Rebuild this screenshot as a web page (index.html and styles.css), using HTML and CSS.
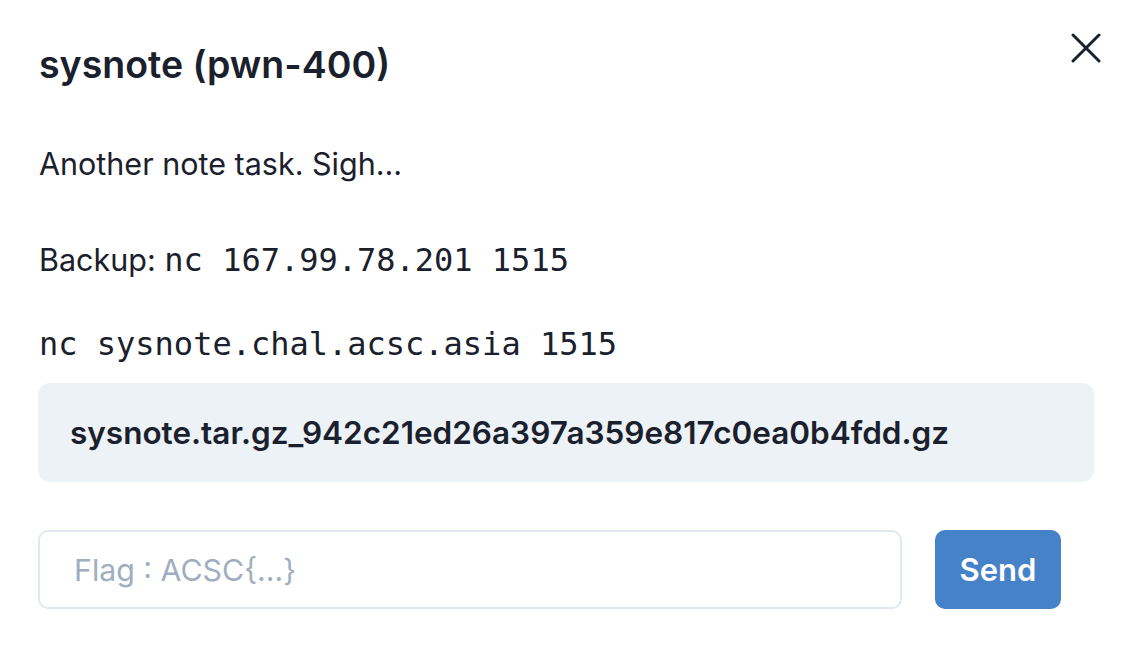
FILE: index.html
```html
<!DOCTYPE html>
<html>
<head>
<meta charset="utf-8">
<link rel="stylesheet" href="styles.css">
</head>
<body>
<div class="modal">
  <header class="header">
    <h2 class="title">sysnote (pwn-400)</h2>
    <button class="close" aria-label="Close">
      <svg width="30" height="30" viewBox="0 0 30 30"><path d="M2 2 L28 28 M28 2 L2 28" stroke="#1a202c" stroke-width="3" stroke-linecap="round" fill="none"/></svg>
    </button>
  </header>
  <p class="text first">Another note task. Sigh...</p>
  <p class="text second">Backup: <code>nc 167.99.78.201 1515</code></p>
  <p class="text third"><code>nc sysnote.chal.acsc.asia 1515</code></p>
  <div class="file">sysnote.tar.gz_942c21ed26a397a359e817c0ea0b4fdd.gz</div>
  <form class="flag-row">
    <input class="flag-input" type="text" placeholder="Flag : ACSC{...}">
    <button class="send" type="button">Send</button>
  </form>
</div>
</body>
</html>
```

FILE: styles.css
```css
html, body {
  margin: 0;
  padding: 0;
  background: #ffffff;
}
body {
  font-family: Inter, "Noto Sans", sans-serif;
  color: #1a202c;
}
.modal {
  padding: 0 38px 0 38px;
}
.header {
  display: flex;
  justify-content: space-between;
  align-items: flex-start;
  padding-top: 40px;
}
.title {
  margin: 0;
  font-size: 37.5px;
  line-height: 50px;
  font-weight: 600;
  padding-left: 1px;
}
.close {
  margin-top: -12px;
  margin-right: -12px;
  width: 40px;
  height: 40px;
  border: none;
  background: transparent;
  padding: 0;
  display: flex;
  align-items: center;
  justify-content: center;
}
.close svg { width: 30px; height: 30px; }
.text {
  margin: 0;
  font-size: 30.5px;
  line-height: 40px;
  padding-left: 1px;
}
.text code {
  font-family: "DejaVu Sans Mono", "Liberation Mono", monospace;
  font-size: 32px;
  line-height: 1;
}
.first { margin-top: 54px; }
.second { margin-top: 56px; }
.third { margin-top: 44px; }
.file {
  margin-top: 19px;
  height: 99px;
  background: #edf2f7;
  border-radius: 12px;
  display: flex;
  align-items: center;
  padding-left: 32px;
  font-size: 31.5px;
  font-weight: 600;
}
.flag-row {
  display: flex;
  align-items: center;
  margin: 48px 0 0 0;
}
.flag-input {
  flex: 0 0 864px;
  width: 864px;
  height: 79px;
  box-sizing: border-box;
  border: 2px solid #e2e8f0;
  border-radius: 10px;
  padding: 0 0 0 34px;
  font-family: Inter, "Noto Sans", sans-serif;
  font-size: 30.3px;
  color: #1a202c;
  outline: none;
}
.flag-input::placeholder { color: #a0aec0; }
.send {
  margin-left: 33px;
  width: 126px;
  height: 79px;
  border: none;
  border-radius: 10px;
  background: #4682c8;
  color: #ffffff;
  font-family: Inter, "Noto Sans", sans-serif;
  font-size: 31px;
  font-weight: 600;
  padding: 0;
}
```
